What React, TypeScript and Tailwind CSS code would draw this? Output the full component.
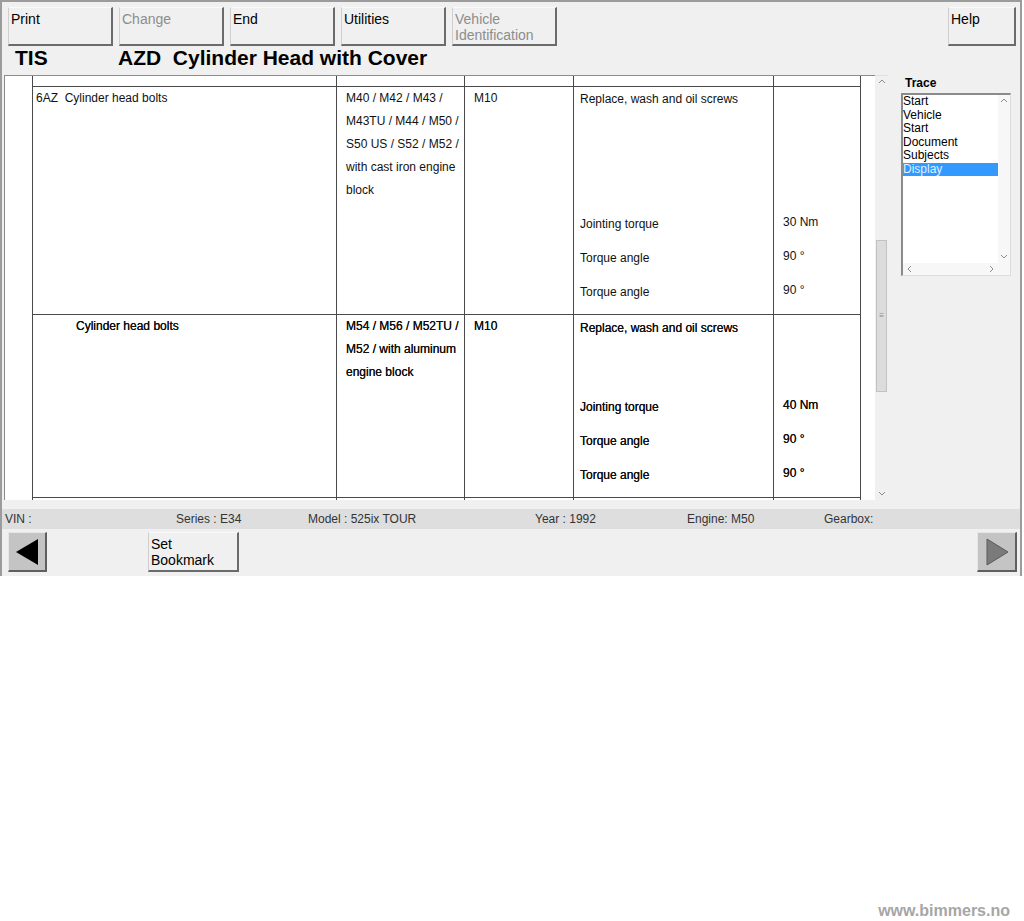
import React from "react";

function ToolButton({ label, disabled, w = "w-[105px]" }: { label: React.ReactNode; disabled?: boolean; w?: string }) {
  return (
    <div
      className={`${w} h-[39px] bg-[#f0f0f0] border-l border-t border-l-[#cfcfcf] border-t-[#fafafa] border-r-2 border-b-2 border-r-[#6b6b6b] border-b-[#6b6b6b] px-[2px] pt-[3px] text-[14px] leading-[16px] ${
        disabled ? "text-[#8d8d8d]" : "text-black"
      }`}
    >
      {label}
    </div>
  );
}

function Arrow({ dir, className }: { dir: "up" | "down" | "left" | "right"; className?: string }) {
  const pts = {
    up: "1,5 4,2 7,5",
    down: "1,2 4,5 7,2",
    left: "5,1 2,4 5,7",
    right: "3,1 6,4 3,7",
  }[dir];
  return (
    <svg width="8" height="8" viewBox="0 0 8 8" className={className}>
      <polyline points={pts} fill="none" stroke="#8a8a8a" strokeWidth="1" />
    </svg>
  );
}

const cellBase = "border-r border-b border-[#4a4a4a]";
const bold = "[text-shadow:0_0_0.4px_#000]";

function Row({
  h,
  desc,
  descPad,
  models,
  top,
  gap,
  vals,
  valTop,
  heavy,
}: {
  h: string;
  desc: string;
  descPad: string;
  models: string[];
  top: string;
  gap: string;
  vals: string[];
  valTop: string;
  heavy?: boolean;
}) {
  const t = heavy ? bold : "";
  const labels = ["Jointing torque", "Torque angle", "Torque angle"];
  return (
    <>
      <div className={`${cellBase} ${h} ${descPad} leading-[23px] ${t}`}>{desc}</div>
      <div className={`${cellBase} ${h} pl-[9px] leading-[23px] ${t}`}>
        {models.map((m, i) => (
          <div key={i}>{m}</div>
        ))}
      </div>
      <div className={`${cellBase} ${h} pl-[9px] leading-[23px] ${t}`}>M10</div>
      <div className={`${cellBase} ${h} pl-[6px] ${top} ${t}`}>
        <div className="leading-[23px]">Replace, wash and oil screws</div>
        <div className={gap}>
          {labels.map((l, i) => (
            <div key={i} className="h-[34px] leading-[34px]">
              {l}
            </div>
          ))}
        </div>
      </div>
      <div className={`${cellBase} ${h} pl-[9px] ${valTop} ${t}`}>
        {vals.map((v, i) => (
          <div key={i} className="h-[34px] leading-[34px]">
            {v}
          </div>
        ))}
      </div>
    </>
  );
}

export default function App() {
  const trace = ["Start", "Vehicle", "Start", "Document", "Subjects"];
  const status: [string, string][] = [
    ["VIN :", "w-[171px]"],
    ["Series : E34", "w-[132px]"],
    ["Model : 525ix TOUR", "w-[227px]"],
    ["Year : 1992", "w-[152px]"],
    ["Engine: M50", "w-[137px]"],
    ["Gearbox:", "w-[120px]"],
  ];

  return (
    <div className="min-h-[921px] w-[1024px] flex flex-col bg-white font-['Liberation_Sans',Arial,sans-serif] text-[12px] text-[#111]">
      <div className="w-[1022px] h-[576px] bg-[#f0f0f0] border-t-2 border-l-2 border-r-2 border-[#9c9c9c] flex flex-col">
        {/* toolbar */}
        <div className="flex pt-[5px] pl-[6px] pr-[4px]">
          <div className="flex gap-[6px]">
            <ToolButton label="Print" />
            <ToolButton label="Change" disabled />
            <ToolButton label="End" />
            <ToolButton label="Utilities" />
            <ToolButton label={<>Vehicle<br />Identification</>} disabled />
          </div>
          <div className="ml-auto">
            <ToolButton label="Help" w="w-[68px]" />
          </div>
        </div>

        {/* title */}
        <div className="flex h-[24px] items-center text-[21px] font-bold text-black leading-[24px]">
          <div className="w-[116px] pl-[13px]">TIS</div>
          <div className="whitespace-pre">AZD  Cylinder Head with Cover</div>
        </div>

        {/* main */}
        <div className="flex mt-[5px] h-[425px]">
          <div className="ml-[2px] w-[871px] h-full bg-white border-l border-t border-[#8c8c8c] flex overflow-hidden">
            <div className="w-[28px] shrink-0 border-r border-[#4a4a4a]" />
            <div className="grid grid-cols-[304px_128px_109px_200px_87px] auto-rows-min content-start">
              <div className={`${cellBase} h-[11px]`} />
              <div className={`${cellBase} h-[11px]`} />
              <div className={`${cellBase} h-[11px]`} />
              <div className={`${cellBase} h-[11px]`} />
              <div className={`${cellBase} h-[11px]`} />
              <Row
                h="h-[228px]"
                desc="6AZ  Cylinder head bolts"
                descPad="pl-[3px] whitespace-pre"
                models={["M40 / M42 / M43 /", "M43TU / M44 / M50 /", "S50 US / S52 / M52 /", "with cast iron engine", "block"]}
                top="pt-[1px]"
                gap="mt-[96px]"
                vals={["30 Nm", "90 °", "90 °"]}
                valTop="pt-[118px]"
              />
              <Row
                h="h-[183px]"
                desc="Cylinder head bolts"
                descPad="pl-[43px]"
                models={["M54 / M56 / M52TU /", "M52 / with aluminum", "engine block"]}
                top="pt-[2px]"
                gap="mt-[50px]"
                vals={["40 Nm", "90 °", "90 °"]}
                valTop="pt-[73px]"
                heavy
              />
              <div className={`${cellBase} h-[20px]`} />
              <div className={`${cellBase} h-[20px]`} />
              <div className={`${cellBase} h-[20px]`} />
              <div className={`${cellBase} h-[20px]`} />
              <div className={`${cellBase} h-[20px]`} />
            </div>
          </div>
          {/* vertical scrollbar */}
          <div className="w-[13px] h-full bg-[#f0f0f0] flex flex-col items-center border-t border-[#e0e0e0]">
            <Arrow dir="up" className="mt-[2px]" />
            <div className="mt-[154px] w-[11px] h-[152px] bg-[#dcdcdc] border border-[#c2c2c2] flex items-center justify-center text-[8px] leading-none text-[#8a8a8a]">
              ≡
            </div>
            <div className="flex-1" />
            <Arrow dir="down" className="mb-[2px]" />
          </div>

          {/* trace panel */}
          <div className="flex-1 pl-[13px]">
            <div className="pl-[4px] pt-[1px] font-bold text-black leading-[14px]">Trace</div>
            <div className="mt-[3px] w-[110px] h-[183px] bg-white border-l-2 border-t-2 border-[#8a8a8a] border-r border-b border-r-[#dcdcdc] border-b-[#dcdcdc] flex flex-col">
              <div className="flex flex-1">
                <div className="flex-1 leading-[13.5px] text-black">
                  {trace.map((t, i) => (
                    <div key={i}>{t}</div>
                  ))}
                  <div className="bg-[#3399ff] text-[#dff0ff]">Display</div>
                </div>
                <div className="w-[12px] bg-[#f7f7f7] flex flex-col items-center">
                  <Arrow dir="up" className="mt-[2px]" />
                  <div className="flex-1" />
                  <Arrow dir="down" className="mb-[2px]" />
                </div>
              </div>
              <div className="h-[12px] flex items-center bg-[#f7f7f7]">
                <Arrow dir="left" className="ml-[3px]" />
                <div className="flex-1" />
                <Arrow dir="right" className="mr-[15px]" />
              </div>
            </div>
          </div>
        </div>

        {/* status */}
        <div className="mt-[9px] h-[20px] bg-[#dedede] flex items-center pl-[3px] text-[#333] leading-[20px]">
          {status.map(([s, w], i) => (
            <div key={i} className={w}>
              {s}
            </div>
          ))}
        </div>

        {/* bottom nav */}
        <div className="flex items-start pt-[3px] pl-[6px] pr-[3px]">
          <div className="w-[39px] h-[40px] bg-[#c4c4c4] border-l border-t border-[#e6e6e6] border-r-2 border-b-2 border-r-[#5f5f5f] border-b-[#5f5f5f] flex items-center justify-center">
            <svg width="26" height="28" viewBox="0 0 26 28">
              <polygon points="24,1 24,27 2,14" fill="#000" />
            </svg>
          </div>
          <div className="ml-[101px] w-[91px] h-[40px] bg-[#f0f0f0] border-l border-t border-l-[#cfcfcf] border-t-[#fafafa] border-r-2 border-b-2 border-[#6b6b6b] px-[2px] pt-[3px] text-[14px] leading-[16px] text-black">
            Set
            <br />
            Bookmark
          </div>
          <div className="ml-auto w-[40px] h-[40px] bg-[#c4c4c4] border-l border-t border-[#e6e6e6] border-r-2 border-b-2 border-r-[#5f5f5f] border-b-[#5f5f5f] flex items-center justify-center">
            <svg width="26" height="28" viewBox="0 0 26 28">
              <polygon points="3,1 3,27 24,14" fill="#7a7a7a" stroke="#5a5a5a" strokeWidth="1" />
            </svg>
          </div>
        </div>
      </div>

      <div className="flex-1" />
      <div className="self-end pr-[14px] pb-[1px] text-[16px] font-bold leading-[18px] text-[#a6a6a6]">
        www.bimmers.no
      </div>
    </div>
  );
}
